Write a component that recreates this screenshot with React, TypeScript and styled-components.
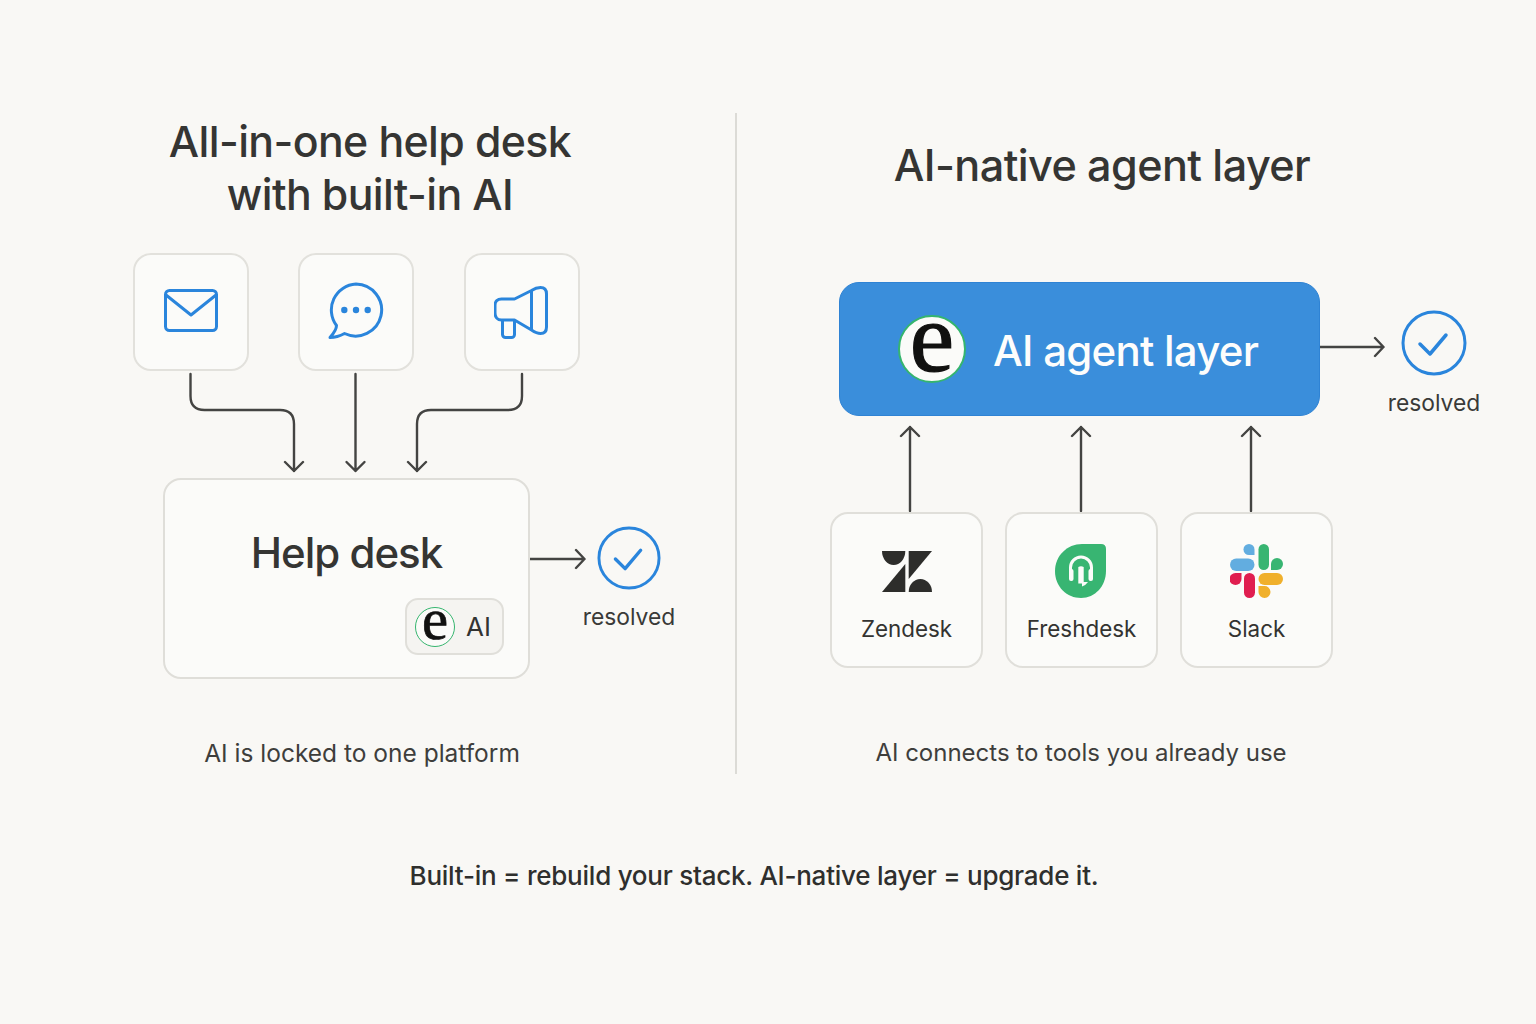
import React from "react";
import styled, {createGlobalStyle} from "styled-components";

const GlobalStyle = createGlobalStyle`
  html, body {
    margin: 0;
    padding: 0;
    background: #f9f8f5;
  }

  body {
    font-family: Inter, "Liberation Sans", sans-serif;
    color: #333331;
  }
`

const Page = styled.div`
  width: 1536px;
  height: 1024px;
  padding-top: 113px;
  box-sizing: border-box;
  overflow: hidden;
`

const Columns = styled.div`
  display: flex;
  height: 661px;
`

const LeftPanel = styled.section`
  width: 735px;
  padding-top: 2px;
  box-sizing: border-box;
`

const RightPanel = styled.section`
  flex: 1;
  padding-top: 26px;
  box-sizing: border-box;
`

const Divider = styled.div`
  width: 2px;
  background: #dcdbd6;
`

const Title = styled.h1<{ $width: number; $size: number }>`
  width: ${p => p.$width}px;
  margin: 0;
  font-size: ${p => p.$size}px;
  font-weight: 450;
  line-height: 53px;
  letter-spacing: -0.6px;
  text-align: center;
  color: #353533;
`

const Caption = styled.p<{ $width: number; $top: number; $size: number }>`
  width: ${p => p.$width}px;
  margin: ${p => p.$top}px 0 0;
  font-size: ${p => p.$size}px;
  line-height: 30px;
  text-align: center;
  color: #3e3e3c;
`

const IconRow = styled.div`
  display: flex;
  gap: 49.5px;
  margin: 32px 0 0 132.8px;
`

const IconCard = styled.div`
  width: 116px;
  height: 118px;
  display: flex;
  align-items: center;
  justify-content: center;
  box-sizing: border-box;
  background: #fbfbf9;
  border: 2px solid #e2e1dc;
  border-radius: 18px;
`

const Connectors = styled.svg`
  display: block;
  margin-left: 133px;
  width: 447px;
  height: 107px;
`

const HelpRow = styled.div`
  display: flex;
  align-items: flex-start;
  margin-left: 163px;
`

const HelpBox = styled.div`
  width: 367px;
  height: 201px;
  display: flex;
  flex-direction: column;
  padding-top: 46px;
  box-sizing: border-box;
  background: #fbfbf9;
  border: 2px solid #dfded9;
  border-radius: 18px;
`

const HelpTitle = styled.div`
  font-size: 42px;
  font-weight: 450;
  line-height: 53px;
  letter-spacing: -1px;
  text-align: center;
  color: #353533;
`

const AiChip = styled.div`
  align-self: flex-end;
  display: flex;
  align-items: center;
  gap: 11px;
  width: 99px;
  height: 57px;
  margin: 19px 24px 0 0;
  padding-left: 8px;
  box-sizing: border-box;
  background: #f5f4f1;
  border: 2px solid #e0dfda;
  border-radius: 13px;
  font-size: 26px;
  color: #333331;
`

const LogoCircle = styled.div<{ $size: number }>`
  width: ${p => p.$size}px;
  height: ${p => p.$size}px;
  flex: none;
  display: flex;
  align-items: center;
  justify-content: center;
  box-sizing: border-box;
  background: #fbfbf9;
  border: ${p => p.$size > 50 ? 2 : 1.5}px solid #35b56e;
  border-radius: 50%;
  font-family: "Liberation Serif", serif;
  font-size: ${p => p.$size * 1.47}px;
  line-height: 1;
  color: #111110;
  -webkit-text-stroke: ${p => p.$size * 0.018}px #111110;

  > span {
    display: block;
    transform: translateY(-${p => p.$size * 0.157}px);
  }
`

const FlowArrow = styled.svg<{ $top: number; $width: number }>`
  flex: none;
  display: block;
  width: ${p => p.$width}px;
  height: 24px;
  margin-top: ${p => p.$top}px;
`

const Resolved = styled.div<{ $top: number; $left: number }>`
  width: 92px;
  flex: none;
  display: flex;
  flex-direction: column;
  align-items: center;
  margin: ${p => p.$top}px 0 0 ${p => p.$left}px;
  font-size: 22.8px;
  color: #3a3a38;
`

const ResolvedText = styled.div`
  margin-top: 12px;
  line-height: 30px;
  white-space: nowrap;
`

const AgentRow = styled.div`
  display: flex;
  align-items: flex-start;
  height: 134px;
  margin: 90px 0 0 102px;
`

const AgentBar = styled.div`
  width: 481px;
  height: 134px;
  flex: none;
  display: flex;
  align-items: center;
  gap: 27px;
  padding-left: 58px;
  box-sizing: border-box;
  background: #3a8edb;
  border: 1px solid #2f83d4;
  border-radius: 20px;
`

const AgentLabel = styled.div`
  padding-top: 2px;
  font-size: 42px;
  font-weight: 500;
  letter-spacing: -0.75px;
  color: #fdfdfc;
`

const UpArrows = styled.svg`
  display: block;
  margin-left: 94px;
  width: 502px;
  height: 96px;
`

const ToolRow = styled.div`
  display: flex;
  gap: 22px;
  margin-left: 93px;
`

const ToolCard = styled.div`
  width: 153px;
  height: 156px;
  display: flex;
  flex-direction: column;
  align-items: center;
  padding-top: 30px;
  box-sizing: border-box;
  background: #fbfbf9;
  border: 2px solid #e0dfda;
  border-radius: 18px;
`

const ToolLogo = styled.div`
  height: 54px;
  display: flex;
  align-items: center;
  justify-content: center;
`

const ToolName = styled.div`
  margin-top: 16px;
  font-size: 22.4px;
  line-height: 30px;
  color: #333331;
`

const Footer = styled.p`
  width: 1508px;
  margin: 85px 0 0;
  font-size: 26px;
  font-weight: 450;
  line-height: 34px;
  letter-spacing: -0.24px;
  text-align: center;
  color: #2f2f2d;
`

const BLUE = "#2a85dc";
const LINE = "#444442";

const MailIcon = () => <svg width="54" height="46" viewBox="0 0 54 46" fill="none" stroke={BLUE} strokeWidth="3" strokeLinejoin="round">
    <rect x="1.5" y="1.5" width="51" height="40" rx="4"/>
    <path d="M2 6L27 26L52 6"/>
</svg>

const ChatIcon = () => <svg width="56" height="60" viewBox="0 0 56 60" fill="none" stroke={BLUE} strokeWidth="3" strokeLinejoin="round">
    <path d="M28 2A26 26 0 1 1 16.500 51.500C12 54 7 55.500 2 55.500C6 51 8.500 47 8.500 43.500A26 26 0 0 1 28 2Z"/>
    <circle cx="16.300" cy="28" r="3.200" fill={BLUE} stroke="none"/>
    <circle cx="28" cy="28" r="3.200" fill={BLUE} stroke="none"/>
    <circle cx="39.700" cy="28" r="3.200" fill={BLUE} stroke="none"/>
</svg>

const MegaphoneIcon = () => <svg width="55" height="56" viewBox="0.500 -2 55 56" fill="none" stroke={BLUE} strokeWidth="3" strokeLinejoin="round">
    <path d="M8 13H21L38 4.500C41 2.500 44 1.500 47 1.500C51 1.500 53 4 53 8V41C53 45 51 47.500 47 47.500C44 47.500 41 46 38 44L21 34H8C4 34 1.500 31 1.500 27V19C1.500 15.500 4 13 8 13Z"/>
    <path d="M38 4.500V44"/>
    <path d="M9 34V48.500A3 3 0 0 0 12 51.500H18A3 3 0 0 0 21 48.500V34"/>
</svg>

const CheckCircle = ({size}: { size: number }) => <svg width={size} height={size} viewBox="0 0 66 66" fill="none" stroke={BLUE} strokeWidth="3" strokeLinecap="round" strokeLinejoin="round">
    <circle cx="33" cy="33" r="31"/>
    <path d="M19 34L29 44L45 25" strokeWidth="3.500"/>
</svg>

const ZendeskLogo = () => <svg width="50" height="41" viewBox="0 0 50 41" fill="#2d2d2b">
    <path d="M0 0H23.300A11.650 14 0 0 1 0 0Z"/>
    <path d="M23.300 13V41H0Z"/>
    <path d="M26.700 0H50L26.700 28Z"/>
    <path d="M26.700 41A11.650 13 0 0 1 50 41Z"/>
</svg>

const FreshdeskLogo = () => <svg width="54" height="54" viewBox="0 0 54 54">
    <path d="M46 0H27C12 0 0 12 0 27C0 43 12 54 26 54C40 54 51 42 51 27V5Q51 0 46 0Z" fill="#38b572"/>
    <path d="M15.500 29V23.500A10.500 10.500 0 0 1 36.500 23.500V29" fill="none" stroke="#fbfbf9" strokeWidth="3"/>
    <rect x="14" y="25" width="4.500" height="12" rx="2" fill="#fbfbf9"/>
    <rect x="33.500" y="25" width="4.500" height="12" rx="2" fill="#fbfbf9"/>
    <path d="M23.300 23Q26 21.500 28.700 23V38H33Q31 41 27 42.500V39.500H23.300Z" fill="#fbfbf9"/>
</svg>

const SlackLogo = () => <svg width="53" height="54" viewBox="0 0 53 54">
    <path d="M19 0A5.500 5.500 0 0 0 19 11H24.500V5.500A5.500 5.500 0 0 0 19 0Z" fill="#62ade0"/>
    <rect x="0" y="14.500" width="24.500" height="12.500" rx="6.250" fill="#62ade0"/>
    <rect x="28.500" y="0" width="10.500" height="26" rx="5.250" fill="#38b572"/>
    <path d="M47 14A6 6 0 0 1 47 26H41V20A6 6 0 0 1 47 14Z" fill="#38b572"/>
    <path d="M5.500 29H11.500V35A6 6 0 1 1 5.500 29Z" fill="#e01e50"/>
    <rect x="14" y="29" width="11" height="25" rx="5.500" fill="#e01e50"/>
    <rect x="28.500" y="29" width="24.500" height="12" rx="6" fill="#f0b02c"/>
    <path d="M28.500 42H34A6 6 0 1 1 28.500 48Z" fill="#f0b02c"/>
</svg>

const RightArrow = ({width, top}: { width: number; top: number }) => <FlowArrow $top={top} $width={width} viewBox={`0 0 ${width} 24`} fill="none" stroke={LINE} strokeWidth="2.400" strokeLinecap="round" strokeLinejoin="round">
    <path d={`M0 12H${width - 1.5}M${width - 10} 3L${width - 1.5} 12L${width - 10} 21`}/>
</FlowArrow>

export default function App() {
    return <Page>
        <GlobalStyle/>
        <Columns>
            <LeftPanel>
                <Title $width={740} $size={42.8}>All-in-one help desk<br/>with built-in AI</Title>
                <IconRow>
                    <IconCard><MailIcon/></IconCard>
                    <IconCard><ChatIcon/></IconCard>
                    <IconCard><MegaphoneIcon/></IconCard>
                </IconRow>
                <Connectors viewBox="0 0 447 107" fill="none" stroke={LINE} strokeWidth="2.400" strokeLinecap="round" strokeLinejoin="round">
                    <path d="M57.500 3V25Q57.500 39 71.500 39H147Q161 39 161 53V100M152 91L161 100L170 91"/>
                    <path d="M222.500 3V100M213.500 91L222.500 100L231.500 91"/>
                    <path d="M389 3V25Q389 39 375 39H298Q284 39 284 53V100M275 91L284 100L293 91"/>
                </Connectors>
                <HelpRow>
                    <HelpBox>
                        <HelpTitle>Help desk</HelpTitle>
                        <AiChip>
                            <LogoCircle $size={40}><span>e</span></LogoCircle>
                            AI
                        </AiChip>
                    </HelpBox>
                    <RightArrow top={69} width={56}/>
                    <Resolved $top={48} $left={-3}>
                        <CheckCircle size={64}/>
                        <ResolvedText>resolved</ResolvedText>
                    </Resolved>
                </HelpRow>
                <Caption $width={724} $top={59} $size={24.5}>AI is locked to one platform</Caption>
            </LeftPanel>
            <Divider/>
            <RightPanel>
                <Title $width={730} $size={43.2}>AI-native agent layer</Title>
                <AgentRow>
                    <AgentBar>
                        <LogoCircle $size={68}><span>e</span></LogoCircle>
                        <AgentLabel>AI agent layer</AgentLabel>
                    </AgentBar>
                    <RightArrow top={53} width={65}/>
                    <Resolved $top={28} $left={3}>
                        <CheckCircle size={66}/>
                        <ResolvedText>resolved</ResolvedText>
                    </Resolved>
                </AgentRow>
                <UpArrows viewBox="0 0 502 96" fill="none" stroke={LINE} strokeWidth="2.400" strokeLinecap="round" strokeLinejoin="round">
                    <path d="M79 95V11M70 20L79 11L88 20"/>
                    <path d="M250 95V11M241 20L250 11L259 20"/>
                    <path d="M420 95V11M411 20L420 11L429 20"/>
                </UpArrows>
                <ToolRow>
                    <ToolCard>
                        <ToolLogo><ZendeskLogo/></ToolLogo>
                        <ToolName>Zendesk</ToolName>
                    </ToolCard>
                    <ToolCard>
                        <ToolLogo><FreshdeskLogo/></ToolLogo>
                        <ToolName>Freshdesk</ToolName>
                    </ToolCard>
                    <ToolCard>
                        <ToolLogo><SlackLogo/></ToolLogo>
                        <ToolName>Slack</ToolName>
                    </ToolCard>
                </ToolRow>
                <Caption $width={688} $top={70} $size={24}>AI connects to tools you already use</Caption>
            </RightPanel>
        </Columns>
        <Footer>Built-in = rebuild your stack. AI-native layer = upgrade it.</Footer>
    </Page>
}
